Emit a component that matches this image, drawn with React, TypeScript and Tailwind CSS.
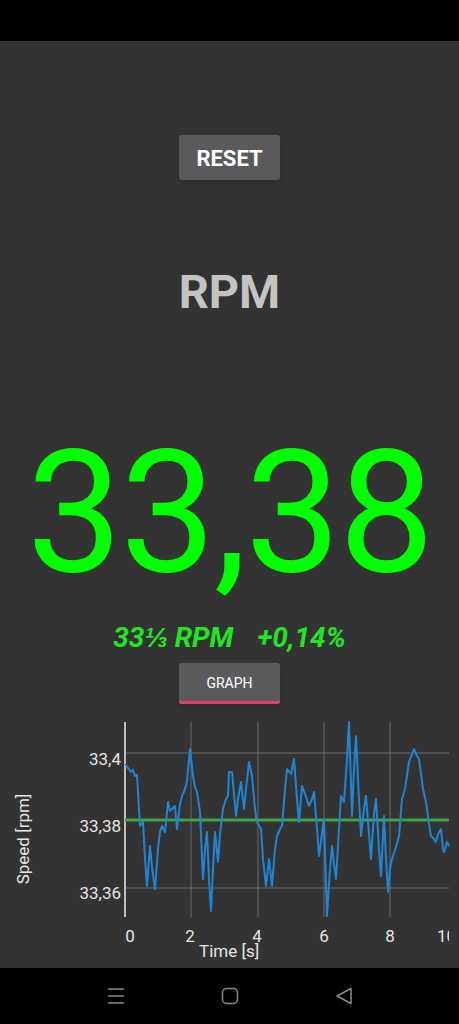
import type { ReactNode } from "react";

const trace: [number, number][] = [
  [125, 765], [128, 769], [131, 773], [133, 771], [135, 777], [137, 776], [140, 827], [143, 823],
  [145, 860], [147, 887], [150, 847], [152, 868], [155, 890], [158, 850], [160, 832], [162, 827],
  [165, 833], [168, 803], [170, 812], [172, 810], [175, 807], [177, 830], [180, 805], [182, 797],
  [185, 790], [187, 782], [190, 750], [193, 777], [195, 788], [197, 793], [200, 813], [203, 880],
  [205, 850], [207, 833], [209, 880], [211, 912], [213, 870], [215, 833], [218, 863], [220, 835],
  [223, 810], [226, 800], [228, 797], [229, 773], [232, 773], [236, 817], [238, 800], [241, 783],
  [244, 810], [246, 790], [249, 763], [252, 777], [255, 810], [257, 823], [261, 830], [263, 860],
  [266, 887], [269, 860], [272, 887], [275, 850], [277, 837], [280, 830], [282, 827], [285, 790],
  [287, 770], [291, 775], [294, 760], [297, 800], [299, 823], [302, 787], [305, 795], [309, 807],
  [312, 800], [314, 793], [317, 830], [319, 857], [322, 835], [324, 820], [327, 917], [330, 870],
  [332, 847], [334, 865], [336, 880], [339, 830], [341, 797], [344, 803], [347, 760], [349, 723],
  [352, 817], [354, 770], [356, 737], [359, 800], [361, 837], [364, 810], [366, 797], [369, 835],
  [371, 860], [374, 815], [376, 800], [379, 850], [381, 877], [384, 817], [386, 860], [388, 893],
  [390, 870], [392, 860], [396, 848], [399, 837], [402, 800], [405, 790], [409, 763], [412, 755],
  [414, 750], [417, 757], [419, 760], [423, 790], [426, 803], [429, 825], [431, 837], [434, 840],
  [436, 843], [438, 835], [441, 830], [443, 850], [444, 853], [447, 843], [449, 847],
];

// speed chart, y coords above are page coords; svg starts at 705
function Chart() {
  const d = trace.map(([x, y], i) => `${i ? "L" : "M"}${x} ${y - 705}`).join(" ");
  return (
    <svg width="459" height="263" viewBox="0 0 459 263" className="block">
      <defs>
        <clipPath id="plot">
          <rect x="0" y="0" width="449" height="263" />
        </clipPath>
      </defs>
      {[49, 184].map((y) => (
        <line key={y} x1="125" x2="449" y1={y} y2={y} stroke="#6a6a6a" strokeWidth="1" />
      ))}
      {[191, 258, 324, 390].map((x) => (
        <line key={x} x1={x} x2={x} y1="18" y2="213" stroke="#6a6a6a" strokeWidth="1" />
      ))}
      <line x1="125" x2="125" y1="18" y2="213" stroke="#bdbdbd" strokeWidth="2" />
      <line x1="125" x2="449" y1="116" y2="116" stroke="#43a047" strokeWidth="3" />
      <path d={d} fill="none" stroke="#1f86d6" strokeWidth="2" strokeLinejoin="round" />

      <g className="fill-[#e6e6e6] text-[17px]">
        <text x="121" y="61" textAnchor="end">33,4</text>
        <text x="121" y="128" textAnchor="end">33,38</text>
        <text x="121" y="195" textAnchor="end">33,36</text>

        <g clipPath="url(#plot)">
          <text x="130" y="238" textAnchor="middle">0</text>
          <text x="190" y="238" textAnchor="middle">2</text>
          <text x="257" y="238" textAnchor="middle">4</text>
          <text x="324" y="238" textAnchor="middle">6</text>
          <text x="390" y="238" textAnchor="middle">8</text>
          <text x="437" y="238">10</text>
        </g>
        <text x="199" y="253">Time [s]</text>
        <text x="0" y="0" textAnchor="middle" transform="translate(29 135) rotate(-90)">
          Speed [rpm]
        </text>
      </g>
    </svg>
  );
}

function NavIcon({ children }: { children: ReactNode }) {
  return (
    <svg width="18" height="18" viewBox="0 0 18 18" fill="none" stroke="#8a8a8a" strokeWidth="1.5">
      {children}
    </svg>
  );
}

export default function App() {
  return (
    <div className="flex h-[1024px] w-[459px] flex-col overflow-hidden bg-black font-['Roboto','Liberation_Sans',sans-serif]">
      <div className="h-[41px] shrink-0 bg-black" />

      <main className="flex flex-1 flex-col items-center bg-[#333333]">
        <button className="mt-[94px] h-[45px] w-[101px] rounded-[3px] bg-[#5a5a5c] pt-[2px] text-[22px] font-bold text-white shadow-md">
          RESET
        </button>

        <p className="mt-[88px] text-[47px] font-bold leading-none text-[#c4c4c4]">RPM</p>

        <p className="mt-[113px] text-[170px] leading-none tracking-[-2px] text-[#00ff00]">33,38</p>

        <p className="mt-[26px] flex gap-[24px] text-[28px] font-bold italic leading-none text-[#22e622]">
          <span>33⅓ RPM</span>
          <span>+0,14%</span>
        </p>

        <button className="mt-[11px] flex h-[41px] w-[101px] flex-col overflow-hidden rounded-[3px] bg-[#5b5b5e] text-[14px] font-normal text-white shadow-md">
          <span className="flex flex-1 items-center justify-center pt-[2px]">GRAPH</span>
          <span className="h-[3px] w-full bg-[#e23f6c]" />
        </button>

        <Chart />
      </main>

      <nav className="flex h-[56px] shrink-0 items-center justify-center gap-[96px] bg-black">
        <NavIcon>
          <line x1="1" x2="17" y1="2" y2="2" />
          <line x1="1" x2="17" y1="9" y2="9" />
          <line x1="1" x2="17" y1="16" y2="16" />
        </NavIcon>
        <NavIcon>
          <rect x="1.5" y="1.5" width="15" height="15" rx="4" />
        </NavIcon>
        <NavIcon>
          <path d="M2 9 L16 1.5 L16 16.5 Z" strokeLinejoin="round" />
        </NavIcon>
      </nav>
    </div>
  );
}
